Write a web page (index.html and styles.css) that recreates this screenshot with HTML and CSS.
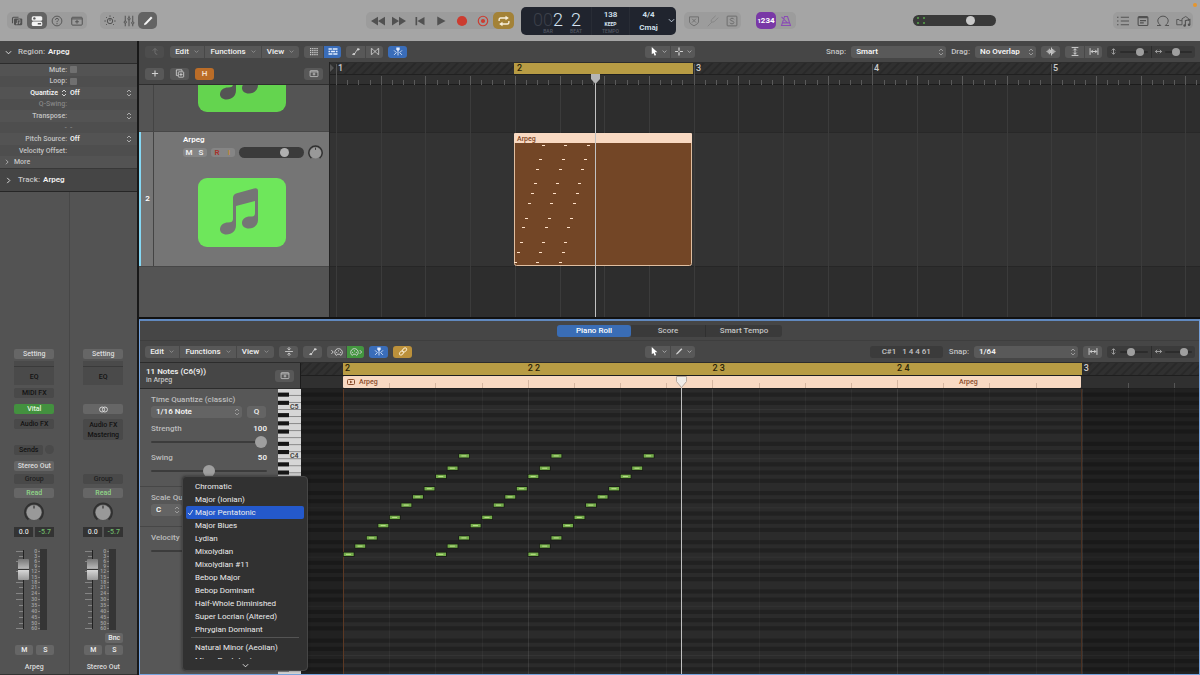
FILE: index.html
```html
<!DOCTYPE html>
<html lang="en">
<head>
<meta charset="utf-8">
<title>Arpeg - Tracks</title>
<link rel="stylesheet" href="styles.css">
</head>
<body>
<svg class="defs" aria-hidden="true">
  <symbol id="i-library" viewBox="0 0 16 16"><path d="M2 11V4.500q0-1.500 1.500-1.500H10" fill="none" stroke="currentColor" stroke-width="1.500"/><rect x="4" y="4.500" width="11" height="9" rx="1.500"/><path d="M8.500 11.500V7l3.500-.8v4.500" fill="none" stroke="#a0a0a0"/><circle cx="7.800" cy="11.500" r="1.100" fill="#a0a0a0"/><circle cx="11.300" cy="10.800" r="1.100" fill="#a0a0a0"/></symbol>
  <symbol id="i-inspector" viewBox="0 0 16 16"><rect x="1" y="1.500" width="14" height="6" rx="2"/><rect x="1" y="8.700" width="14" height="6" rx="2"/><circle cx="4.500" cy="4.500" r="1.600" fill="#5a5a5a"/><path d="M9 11.700h4.500" stroke="#5a5a5a" stroke-width="2"/></symbol>
  <symbol id="i-help" viewBox="0 0 16 16"><g fill="none" stroke="currentColor" stroke-width="1.200"><circle cx="8" cy="8" r="6.500"/><path d="M6 6.500q0-2 2-2t2 1.800q0 1-1.200 1.700-.8.500-.8 1.500"/></g><circle cx="8" cy="11.500" r=".8"/></symbol>
  <symbol id="i-tray" viewBox="0 0 16 16"><g fill="none" stroke="currentColor" stroke-width="1.300"><rect x="1" y="3" width="14" height="10.500" rx="1.200"/><path d="M1 5.200h14M8 6.500v5M5.500 9h5"/></g></symbol>
  <symbol id="i-smart" viewBox="0 0 16 16"><g fill="none" stroke="currentColor" stroke-width="1.300"><circle cx="8" cy="8" r="3.600"/><path d="M8 4.500V8M8 .5v2M2.700 2.700l1.200 1.200M13.300 2.700l-1.200 1.200M.5 8h2M13.500 8h2M2.700 13.300l1.200-1.200M13.300 13.300l-1.200-1.200"/></g></symbol>
  <symbol id="i-mixer" viewBox="0 0 16 16"><g fill="none" stroke="currentColor" stroke-width="1.300"><path d="M3 1v7M3 11v4M8 1v2.500M8 6.500V15M13 1v8M13 12v3"/><circle cx="3" cy="9.500" r="1.500"/><circle cx="8" cy="5" r="1.500"/><circle cx="13" cy="10.500" r="1.500"/></g></symbol>
  <symbol id="i-pencil" viewBox="0 0 16 16"><path d="M2.500 13.500l1-2.500L12 2l2 2-8.500 8.500z"/></symbol>
  <symbol id="i-rew" viewBox="0 0 16 16"><path d="M8 3v10L0 8zM16 3v10L8 8z"/></symbol>
  <symbol id="i-ff" viewBox="0 0 16 16"><path d="M0 3v10l8-5zM8 3v10l8-5z"/></symbol>
  <symbol id="i-start" viewBox="0 0 16 16"><path d="M2 2.500h2.200v11H2zM14 2.500v11L4.500 8z"/></symbol>
  <symbol id="i-play" viewBox="0 0 16 16"><path d="M3 2v12l11-6z"/></symbol>
  <symbol id="i-rec" viewBox="0 0 16 16"><circle cx="8" cy="8" r="6.800" fill="#cc3c30"/></symbol>
  <symbol id="i-cap" viewBox="0 0 16 16"><circle cx="8" cy="8" r="6.300" fill="none" stroke="#cc3c30" stroke-width="1.500"/><circle cx="8" cy="8" r="2.800" fill="#cc3c30"/></symbol>
  <symbol id="i-cycle" viewBox="0 0 16 16"><g fill="none" stroke="currentColor" stroke-width="1.800"><path d="M1.500 8V6q0-2 2-2H12M14.500 8v2q0 2-2 2H4"/></g><path d="M10 1l4.500 3L10 7zM6 9l-4.500 3L6 15z"/></symbol>
  <symbol id="i-replace" viewBox="0 0 16 16"><g fill="none" stroke="currentColor" stroke-width="1.200"><path d="M2 2.500h12v7q0 2-6 5-6-3-6-5zM5.500 5l5 5M10.500 5l-5 5"/></g></symbol>
  <symbol id="i-tuner" viewBox="0 0 16 16"><g fill="none" stroke="currentColor" stroke-width="1.300"><path d="M1 15l5.500-5.500M5.800 6.500q-1 3 .7 3t3-.5L15 3.500M5.800 6.500L11.500 1"/></g></symbol>
  <symbol id="i-solo" viewBox="0 0 16 16"><g fill="none" stroke="currentColor" stroke-width="1.300"><rect x="1.500" y="1.500" width="13" height="13" rx="1"/><path d="M10.500 5.800Q10 4.300 8 4.300T5.600 6q0 1.400 2.400 1.900T10.500 10q0 1.800-2.500 1.800T5.300 10.200"/></g></symbol>
  <symbol id="i-metro" viewBox="0 0 16 16"><g fill="none" stroke="currentColor" stroke-width="1.400"><path d="M6 2h4l4 12H2zM3.500 10.500h9M9.500 10L2 2.500"/></g></symbol>
  <symbol id="i-list" viewBox="0 0 16 16"><path d="M5 3h11M5 8h11M5 13h11M0 3h2M0 8h2M0 13h2" stroke="currentColor" stroke-width="1.300"/></symbol>
  <symbol id="i-note" viewBox="0 0 16 16"><rect x="1.500" y="2" width="13" height="12" rx="1.500" fill="none" stroke="currentColor" stroke-width="1.500"/><path d="M1.500 3.500h13M4 7.500h8M4 10.500h5" stroke="currentColor" stroke-width="1.500"/></symbol>
  <symbol id="i-loop" viewBox="0 0 16 16"><path d="M0 14h5q-4-3-4-6a7 6.500 0 0 1 14 0q0 3-4 6h5" fill="none" stroke="currentColor" stroke-width="1.300"/></symbol>
  <symbol id="i-media" viewBox="0 0 20 16"><path d="M1 13V6h3l1 1.500h3M1 13h7V5l5-3 4 3v3" fill="none" stroke="currentColor" stroke-width="1.200"/><path d="M12.500 14V7.500l6-1.500v7" fill="none" stroke="currentColor" stroke-width="1.500"/><circle cx="11.500" cy="14" r="1.700"/><circle cx="17.400" cy="13" r="1.700"/></symbol>
  <symbol id="i-up" viewBox="0 0 16 16"><path d="M4 6.500L8 2.500l4 4M8 3v7q0 3 4 3" fill="none" stroke="currentColor" stroke-width="1.500"/></symbol>
  <symbol id="i-down" viewBox="0 0 16 16"><path d="M2 5l6 6 6-6" fill="none" stroke="currentColor" stroke-width="2"/></symbol>
  <symbol id="i-right" viewBox="0 0 16 16"><path d="M5 2l6 6-6 6" fill="none" stroke="currentColor" stroke-width="2"/></symbol>
  <symbol id="i-updown" viewBox="0 0 8 12"><path d="M1 4.500L4 1.500l3 3M1 7.500l3 3 3-3" fill="none" stroke="currentColor" stroke-width="1.200"/></symbol>
  <symbol id="i-grid" viewBox="0 0 16 16"><path d="M1 3h14M1 6.500h14M1 10h14M1 13.500h14" stroke="currentColor" stroke-width="2.200" stroke-dasharray="2.200 1.600"/></symbol>
  <symbol id="i-regions" viewBox="0 0 16 16"><path d="M0 3.500h6M7.500 3.500H16M0 8h3M4.500 8h7M13 8h3M0 12.500h7M8.500 12.500H16" stroke="currentColor" stroke-width="2.800"/></symbol>
  <symbol id="i-auto" viewBox="0 0 16 16"><path d="M1 13h2.500Q6 13 7.500 9T12 4h3" fill="none" stroke="currentColor" stroke-width="1.500"/><circle cx="4.500" cy="12.500" r="2"/><circle cx="11.500" cy="4.300" r="2"/></symbol>
  <symbol id="i-flex" viewBox="0 0 16 16"><path d="M1.500 2.500v11l3-2 7-7 3-2v11l-3-2-7-7z" fill="none" stroke="currentColor" stroke-width="1.500"/></symbol>
  <symbol id="i-catch" viewBox="0 0 16 16"><path d="M5 1h6v3.500L8 7.500l-3-3z"/><path d="M8 6v9M1 6l4 4-4 4M15 6l-4 4 4 4" fill="none" stroke="currentColor" stroke-width="1.500"/></symbol>
  <symbol id="i-arrow" viewBox="0 0 16 16"><path d="M4 0v13l3-2.500 2.200 5 2.500-1.200L9.500 9.500H14z"/></symbol>
  <symbol id="i-cross" viewBox="0 0 16 16"><path d="M8 1v5.500M8 9.500V15M1 8h5.500M9.500 8H15" stroke="currentColor" stroke-width="2.200"/></symbol>
  <symbol id="i-wave" viewBox="0 0 16 16"><path d="M1 7v2M3 5v6M5 3v10M7 5v6M9 1v14M11 3.500v9M13 5v6M15 7v2" stroke="currentColor" stroke-width="1.700"/></symbol>
  <symbol id="i-vfit" viewBox="0 0 16 16"><path d="M2 1h12M2 15h12M8 3v10M5 6l3-3 3 3M5 10l3 3 3-3" fill="none" stroke="currentColor" stroke-width="1.700"/></symbol>
  <symbol id="i-hfit" viewBox="0 0 16 16"><path d="M1 2v12M15 2v12M3 8h10M6 5L3 8l3 3M10 5l3 3-3 3" fill="none" stroke="currentColor" stroke-width="1.700"/></symbol>
  <symbol id="i-v" viewBox="0 0 16 16"><path d="M8 2v12M4 5.500L8 1.500l4 4M4 10.500l4 4 4-4" fill="none" stroke="currentColor" stroke-width="2"/></symbol>
  <symbol id="i-h" viewBox="0 0 16 16"><path d="M1 8h14M5 4L1 8l4 4M11 4l4 4-4 4" fill="none" stroke="currentColor" stroke-width="2"/></symbol>
  <symbol id="i-plus" viewBox="0 0 16 16"><path d="M8 2.500v11M2.500 8h11" stroke="currentColor" stroke-width="2"/></symbol>
  <symbol id="i-dup" viewBox="0 0 16 16"><g fill="none" stroke="currentColor" stroke-width="1.500"><path d="M4 11.500H1.500v-10h10V4"/><rect x="5" y="5" width="9.500" height="9.500" rx="1"/><path d="M9.700 7v5.500M7 9.700h5.500"/></g></symbol>
  <symbol id="i-collapse" viewBox="0 0 16 16"><path d="M1 8h14M8 0v5M8 16v-5M5 2.500l3 3 3-3M5 13.500l3-3 3 3" fill="none" stroke="currentColor" stroke-width="1.500"/></symbol>
  <symbol id="i-midiin" viewBox="0 0 20 16"><g fill="none" stroke="currentColor" stroke-width="1.500"><path d="M1 5l3 3-3 3M9 13.500a6 6 0 1 1 7 0l-1.500-2h-4z"/></g><circle cx="9.500" cy="8.500" r="1"/><circle cx="15.500" cy="8.500" r="1"/><circle cx="12.500" cy="6" r="1"/></symbol>
  <symbol id="i-midiout" viewBox="0 0 20 16"><g fill="none" stroke="currentColor" stroke-width="1.500"><path d="M16 5l3 3-3 3M4 13.500a6 6 0 1 1 7 0l-1.500-2h-4z"/></g><circle cx="4.500" cy="8.500" r="1"/><circle cx="10.500" cy="8.500" r="1"/><circle cx="7.500" cy="6" r="1"/></symbol>
  <symbol id="i-link" viewBox="0 0 16 16"><g fill="none" stroke="currentColor" stroke-width="1.700" transform="rotate(-45 8 8)"><rect x="0" y="5.300" width="8.500" height="5.400" rx="2.700"/><rect x="7.500" y="5.300" width="8.500" height="5.400" rx="2.700"/></g></symbol>
  <symbol id="i-stereo" viewBox="0 0 16 16"><g fill="none" stroke="currentColor" stroke-width="1.600"><circle cx="5.500" cy="8" r="4.500"/><circle cx="10.500" cy="8" r="4.500"/></g></symbol>
  <symbol id="i-knob" viewBox="0 0 20 20"><path d="M4.500 17.500A9 9 0 1 1 15.500 17.500" fill="none" stroke="#303030" stroke-width="1.800"/><circle cx="10" cy="10.500" r="7.500" fill="#999"/><path d="M10 3.500v3" stroke="#333" stroke-width="1.200"/></symbol>
  <symbol id="i-music" viewBox="0 0 88 69"><path d="M35 20Q35 16.500 38 15.500L56 10.500Q60 9.500 60 13V42C60 47 56 50.500 51 50.500 46.500 50.500 44 48 44 45 44 41 47.500 38.500 52 38.500 55.500 38.500 57 38 57 35V23L38 28V47C38 53 34 56.500 28.500 56.500 24.500 56.500 22 54 22 51.500 22 47 26 44.500 30 44.500 33.500 44.500 35 43.500 35 41Z"/></symbol>
  <symbol id="i-check" viewBox="0 0 16 16"><path d="M2.500 9l4 4.500L13 2.500" fill="none" stroke="currentColor" stroke-width="2"/></symbol>
</svg>

<header class="topbar">
  <div class="cluster panels">
    <button aria-label="Library"><svg><use href="#i-library"/></svg></button>
    <button class="dark" aria-label="Inspector"><svg><use href="#i-inspector"/></svg></button>
    <button aria-label="Quick Help"><svg><use href="#i-help"/></svg></button>
    <button aria-label="Toolbar"><svg><use href="#i-tray"/></svg></button>
  </div>
  <div class="cluster">
    <button aria-label="Smart Controls"><svg><use href="#i-smart"/></svg></button>
    <button aria-label="Mixer"><svg><use href="#i-mixer"/></svg></button>
    <button class="dark" aria-label="Editors"><svg><use href="#i-pencil"/></svg></button>
  </div>
  <div class="cluster transport">
    <button aria-label="Rewind"><svg><use href="#i-rew"/></svg></button>
    <button aria-label="Forward"><svg><use href="#i-ff"/></svg></button>
    <button aria-label="Go to Beginning"><svg><use href="#i-start"/></svg></button>
    <button aria-label="Play"><svg><use href="#i-play"/></svg></button>
    <button aria-label="Record"><svg><use href="#i-rec"/></svg></button>
    <button aria-label="Capture Recording"><svg><use href="#i-cap"/></svg></button>
    <button class="gold" aria-label="Cycle"><svg><use href="#i-cycle"/></svg></button>
  </div>
  <div class="lcd">
    <div class="lcd-pos"><div class="digits"><span><i>00</i>2</span><b>BAR</b></div><div class="digits"><span>2</span><b>BEAT</b></div></div>
    <div class="lcd-cell"><strong>138</strong><em>KEEP</em><b>TEMPO</b></div>
    <div class="lcd-cell sig"><strong>4/4</strong><strong>Cmaj</strong></div>
    <button aria-label="Display Mode"><svg><use href="#i-down"/></svg></button>
  </div>
  <div class="cluster modes">
    <button aria-label="Replace"><svg><use href="#i-replace"/></svg></button>
    <button class="faint" aria-label="Tuner"><svg><use href="#i-tuner"/></svg></button>
    <button aria-label="Solo"><svg><use href="#i-solo"/></svg></button>
  </div>
  <div class="cluster count">
    <button class="purple"><small>1</small>234</button>
    <button class="violet" aria-label="Metronome"><svg><use href="#i-metro"/></svg></button>
  </div>
  <div class="master"><i></i><i></i><input type="range" value="64" aria-label="Master Volume"></div>
  <div class="cluster views">
    <button aria-label="List Editors"><svg><use href="#i-list"/></svg></button>
    <button aria-label="Note Pads"><svg><use href="#i-note"/></svg></button>
    <button aria-label="Loop Browser"><svg><use href="#i-loop"/></svg></button>
    <button aria-label="Browsers"><svg class="wide"><use href="#i-media"/></svg></button>
  </div>
  <span class="recdot"></span>
</header>

<main class="workspace">
  <aside class="inspector">
    <h2 class="fold"><svg><use href="#i-down"/></svg>Region: <b>Arpeg</b></h2>
    <div class="params">
      <div><label for="mute">Mute:</label><input type="checkbox" id="mute"></div>
      <div><label for="loop">Loop:</label><input type="checkbox" id="loop"></div>
      <div><span class="name strong">Quantize <svg><use href="#i-updown"/></svg></span><b>Off</b><svg><use href="#i-updown"/></svg></div>
      <div class="off"><span class="name">Q-Swing:</span></div>
      <div><span class="name">Transpose:</span><b></b><svg><use href="#i-updown"/></svg></div>
      <div class="off"><span class="name">-</span><span>-</span></div>
      <div><span class="name">Pitch Source:</span><b>Off</b><svg><use href="#i-updown"/></svg></div>
      <div><span class="name">Velocity Offset:</span></div>
      <div class="more"><svg><use href="#i-right"/></svg>More</div>
    </div>
    <h2 class="fold track-fold"><svg><use href="#i-right"/></svg>Track: <b>Arpeg</b></h2>
    <div class="strips">
      <section class="strip">
        <button>Setting</button>
        <div class="eq"><i></i><span>EQ</span></div>
        <button class="slot">MIDI FX</button>
        <button class="green">Vital</button>
        <div><button class="slot">Audio FX</button></div>
        <div class="sends"><button class="slot">Sends</button><i></i></div>
        <button>Stereo Out</button>
        <button class="slot faded">Group</button>
        <button class="read">Read</button>
        <svg class="pan"><use href="#i-knob"/></svg>
        <div class="values"><output>0.0</output><output class="peak">-5.7</output></div>
        <div class="fader"><svg class="scale"></svg><input type="range" value="83" aria-label="Arpeg Volume"></div>
        <div class="pair"></div>
        <div class="pair"><button>M</button><button>S</button></div>
        <div class="strip-name">Arpeg</div>
      </section>
      <section class="strip">
        <button>Setting</button>
        <div class="eq"><i></i><span>EQ</span></div>
        <div></div>
        <button aria-label="Stereo"><svg><use href="#i-stereo"/></svg></button>
        <div><button class="slot double">Audio FX<br>Mastering</button></div>
        <div></div>
        <div></div>
        <button class="slot faded">Group</button>
        <button class="read">Read</button>
        <svg class="pan"><use href="#i-knob"/></svg>
        <div class="values"><output>0.0</output><output class="peak">-5.7</output></div>
        <div class="fader"><svg class="scale"></svg><input type="range" value="83" aria-label="Stereo Out Volume"></div>
        <div class="pair"><button>Bnc</button></div>
        <div class="pair"><button>M</button><button>S</button></div>
        <div class="strip-name">Stereo Out</div>
      </section>
    </div>
  </aside>

  <div class="panes">
    <section class="tracks">
      <div class="toolbar">
        <div class="side">
          <div class="seg one dim"><button aria-label="Up"><svg><use href="#i-up"/></svg></button></div>
          <div class="seg menus"><button>Edit <svg><use href="#i-down"/></svg></button><button>Functions <svg><use href="#i-down"/></svg></button><button>View <svg><use href="#i-down"/></svg></button></div>
          <div class="seg"><button aria-label="Live Loops"><svg><use href="#i-grid"/></svg></button><button class="blue" aria-label="Tracks View"><svg><use href="#i-regions"/></svg></button></div>
          <div class="seg"><button aria-label="Automation"><svg><use href="#i-auto"/></svg></button><button aria-label="Flex"><svg><use href="#i-flex"/></svg></button></div>
          <div class="seg"><button class="blue" aria-label="Catch Playhead"><svg><use href="#i-catch"/></svg></button></div>
        </div>
        <div class="seg tools"><button aria-label="Pointer Tool"><svg class="white"><use href="#i-arrow"/></svg><svg class="chev"><use href="#i-down"/></svg></button><button aria-label="Marquee Tool"><svg><use href="#i-cross"/></svg><svg class="chev"><use href="#i-down"/></svg></button></div>
        <div class="side end">
          <label for="snap">Snap:</label>
          <span class="pick snap"><select id="snap"><option>Smart</option></select><svg><use href="#i-updown"/></svg></span>
          <label for="drag">Drag:</label>
          <span class="pick drag"><select id="drag"><option>No Overlap</option></select><svg><use href="#i-updown"/></svg></span>
          <div class="seg"><button aria-label="Waveform Zoom"><svg><use href="#i-wave"/></svg></button></div>
          <div class="seg"><button aria-label="Fit Vertically"><svg><use href="#i-vfit"/></svg></button><button aria-label="Fit Horizontally"><svg><use href="#i-hfit"/></svg></button></div>
          <div class="zoomer"><svg><use href="#i-v"/></svg><input type="range" value="80" aria-label="Vertical Zoom"><i></i><svg><use href="#i-h"/></svg><input type="range" value="38" aria-label="Horizontal Zoom"></div>
        </div>
      </div>
      <div class="arrange">
        <div class="headers">
          <div class="headbar">
            <div class="seg"><button aria-label="Add Track"><svg><use href="#i-plus"/></svg></button></div>
            <div class="seg"><button aria-label="Duplicate Track"><svg><use href="#i-dup"/></svg></button></div>
            <div class="seg"><button class="orange">H</button></div>
            <div class="seg last"><button aria-label="Track Header Options"><svg><use href="#i-tray"/></svg></button></div>
          </div>
          <div class="track first"><span class="num"></span><div class="body"><div class="art"><svg><use href="#i-music"/></svg></div></div></div>
          <div class="track selected"><span class="num">2</span>
            <div class="body">
              <h3>Arpeg</h3>
              <div class="trackctl">
                <div class="ms"><button>M</button><button>S</button></div>
                <div class="ms"><button class="r">R</button><button class="i">I</button></div>
                <input type="range" value="74" aria-label="Track Volume">
                <svg><use href="#i-knob"/></svg>
              </div>
              <div class="art"><svg><use href="#i-music"/></svg></div>
            </div>
          </div>
        </div>
        <svg class="timeline" id="timeline"></svg>
      </div>
    </section>

    <section class="editor">
      <nav class="tabs"><button class="on">Piano Roll</button><button>Score</button><button>Smart Tempo</button></nav>
      <div class="toolbar">
        <div class="side">
          <div class="seg menus"><button>Edit <svg><use href="#i-down"/></svg></button><button>Functions <svg><use href="#i-down"/></svg></button><button>View <svg><use href="#i-down"/></svg></button></div>
          <div class="seg"><button aria-label="Collapse"><svg><use href="#i-collapse"/></svg></button></div>
          <div class="seg"><button aria-label="Automation"><svg><use href="#i-auto"/></svg></button></div>
          <div class="seg"><button aria-label="MIDI In"><svg class="wide"><use href="#i-midiin"/></svg></button><button class="leaf" aria-label="MIDI Out"><svg class="wide"><use href="#i-midiout"/></svg></button></div>
          <div class="seg"><button class="blue" aria-label="Catch Playhead"><svg><use href="#i-catch"/></svg></button></div>
          <div class="seg"><button class="amber" aria-label="Link"><svg><use href="#i-link"/></svg></button></div>
        </div>
        <div class="seg tools"><button aria-label="Pointer Tool"><svg class="white"><use href="#i-arrow"/></svg><svg class="chev"><use href="#i-down"/></svg></button><button aria-label="Pencil Tool"><svg><use href="#i-pencil"/></svg><svg class="chev"><use href="#i-down"/></svg></button></div>
        <div class="side end">
          <output class="info"><span>C#1</span><span>1 4 4 61</span></output>
          <label for="esnap">Snap:</label>
          <span class="pick esnap"><select id="esnap"><option>1/64</option></select><svg><use href="#i-updown"/></svg></span>
          <div class="seg"><button aria-label="Fit Horizontally"><svg><use href="#i-hfit"/></svg></button></div>
          <div class="zoomer"><svg><use href="#i-v"/></svg><input type="range" value="38" aria-label="Editor Vertical Zoom"><i></i><svg><use href="#i-h"/></svg><input type="range" value="82" aria-label="Editor Horizontal Zoom"></div>
        </div>
      </div>
      <div class="roll">
        <div class="local">
          <div class="localhead"><div><h3>11 Notes (C6(9))</h3><p>in Arpeg</p></div><div class="seg"><button aria-label="Region Options"><svg><use href="#i-tray"/></svg></button></div></div>
          <div class="localbody">
            <div class="settings">
              <div class="group">
                <label for="tq">Time Quantize (classic)</label>
                <div class="row"><span class="pick tq"><select id="tq"><option>1/16 Note</option></select><svg><use href="#i-updown"/></svg></span><div class="seg"><button>Q</button></div></div>
                <div class="row ends"><label for="strength">Strength</label><b>100</b></div>
                <input type="range" id="strength" value="100">
                <div class="row ends"><label for="swing">Swing</label><b>50</b></div>
                <input type="range" id="swing" value="50">
              </div>
              <div class="group scale-q">
                <label for="key">Scale Quantize</label>
                <div class="row"><span class="pick key"><select id="key"><option>C</option></select><svg><use href="#i-updown"/></svg></span></div>
              </div>
              <div class="group vel">
                <div class="row ends"><label for="velocity">Velocity</label></div>
                <input type="range" id="velocity" value="50">
              </div>
            </div>
            <svg class="keys" id="keys"></svg>
          </div>
        </div>
        <svg class="notes" id="notes"></svg>
      </div>
      <div class="popup" role="listbox" aria-label="Scale">
        <div class="opts">
          <button>Chromatic</button><button>Major (Ionian)</button><button class="sel"><svg><use href="#i-check"/></svg>Major Pentatonic</button><button>Major Blues</button><button>Lydian</button><button>Mixolydian</button><button>Mixolydian #11</button><button>Bebop Major</button><button>Bebop Dominant</button><button>Half-Whole Diminished</button><button>Super Locrian (Altered)</button><button>Phrygian Dominant</button>
        </div>
        <hr>
        <button>Natural Minor (Aeolian)</button>
        <button class="cut">Minor Pentatonic</button>
        <svg class="moredown"><use href="#i-down"/></svg>
      </div>
    </section>
  </div>
</main>
<script src="script.js"></script>
</body>
</html>
```
FILE: styles.css
```css
* { box-sizing: border-box; }
body { margin: 0; height: 100vh; display: flex; flex-direction: column; overflow: hidden; background: #111; color: #dcdcdc; font: 500 8px/10px Roboto, "Liberation Sans", sans-serif; }
button, select, input { font: inherit; color: inherit; margin: 0; }
button { border: 0; padding: 0; background: none; }
h2, h3, p { margin: 0; font-size: inherit; font-weight: inherit; }
svg { fill: currentColor; flex: none; display: block; }
.defs { position: absolute; width: 0; height: 0; }
b { font-weight: 600; color: #f2f2f2; }

input[type=range] { appearance: none; background: none; height: 12px; min-width: 0; }
input[type=range]::-webkit-slider-runnable-track { height: 2px; background: #3c3c3c; border-radius: 1px; }
input[type=range]::-webkit-slider-thumb { appearance: none; width: 8px; height: 8px; margin-top: -3px; border-radius: 50%; background: #9f9f9f; }

.topbar { position: relative; height: 41px; flex: none; display: flex; align-items: center; padding: 0 7px; background: #a5a5a5; color: #515151; }
.cluster { display: flex; height: 17px; border-radius: 5px; background: #9c9c9c; margin-right: 13px; }
.cluster button { width: 19px; display: grid; place-items: center; border-radius: 5px; }
.cluster.panels button { width: 20px; }
.cluster svg { width: 12px; height: 12px; }
.cluster svg.wide { width: 15px; height: 12px; }
.cluster .dark { background: #636363; color: #f4f4f4; }
.cluster .gold { background: #a38237; color: #f8f0dc; }
.cluster .purple { background: #7938a6; color: #fff; display: block; font-weight: 700; }
.purple small { font-size: 6px; }
.cluster .violet { color: #8a4cb5; }
.cluster .faint { color: #868686; }
.cluster.transport { margin: 0 7px 0 196px; padding-left: 1px; }
.cluster.transport button { width: 21px; }
.cluster.transport button:nth-child(-n+2) svg { width: 14px; height: 14px; }
.lcd { width: 155px; height: 28px; flex: none; display: flex; border-radius: 5px; background: #20242e; color: #d6e4f2; margin-right: 8px; }
.lcd-pos { width: 70px; display: flex; gap: 8px; padding-left: 12px; }
.digits { display: flex; flex-direction: column; align-items: center; font-weight: 300; width: 30px; }
.digits + .digits { width: 10px; }
.digits span { font-size: 18px; line-height: 21px; height: 21px; padding-top: 2px; }
.digits i { font-style: normal; color: #3b3f49; }
.lcd b { font-size: 5px; line-height: 7px; color: #535863; font-weight: 500; }
.lcd-cell { width: 38px; border-left: 1px solid #282c35; display: flex; flex-direction: column; align-items: center; }
.lcd-cell strong { font-size: 8px; line-height: 10px; padding-top: 3px; font-weight: 600; }
.lcd-cell em { font-style: normal; font-weight: 700; font-size: 5px; line-height: 8px; }
.lcd button { flex: 1; display: grid; place-items: center; }
.lcd button svg { width: 7px; height: 7px; }
.modes, .count { color: #6c6c6c; }
.cluster.modes { margin-right: 15px; }
.cluster.count button { width: 20px; }
.cluster.count { margin-right: 117px; }
.master { display: flex; align-items: center; gap: 4px; width: 83px; height: 11px; border-radius: 6px; background: #393939; padding-left: 4px; }
.master i { width: 2px; height: 7px; border-top: 2px dotted #4f8b46; border-bottom: 2px dotted #4f8b46; }
.master input { flex: 1; }
.master input::-webkit-slider-runnable-track, .trackctl input::-webkit-slider-runnable-track { background: none; height: 9px; }
.master input::-webkit-slider-thumb { width: 9px; height: 9px; margin: 0; background: #c9c9c9; }
.cluster.views { margin: 0 0 0 auto; }
.cluster.views button { width: 20px; }
.recdot { position: absolute; right: 3px; top: 3px; width: 4px; height: 4px; border-radius: 50%; background: #e5962e; }

.workspace { flex: 1; min-height: 0; display: flex; }
.inspector { width: 139px; flex: none; display: flex; flex-direction: column; background: #535353; border-right: 2px solid #181818; }
.fold { height: 22px; flex: none; display: flex; align-items: center; gap: 3px; background: #454545; color: #c4c4c4; }
.fold svg { width: 7px; height: 7px; margin: 0 3px 0 5px; color: #eee; }
.params { border-top: 1px solid #2c2c2c; height: 105px; display: grid; grid-template-rows: repeat(9, 1fr); color: #c4c4c4; font-size: 7px; }
.params > div { display: flex; align-items: center; gap: 3px; }
.params > div:nth-child(even) { background: #4e4e4e; }
.params label, .params .name { width: 67px; text-align: right; display: flex; justify-content: flex-end; align-items: center; gap: 3px; }
.params b { width: 53px; }
.params svg { width: 6px; height: 8px; }
.params .strong { color: #f2f2f2; font-weight: 600; }
.params .off { color: #858585; }
.params input { appearance: none; width: 7px; height: 7px; border-radius: 1px; background: #707070; }
.params .more svg { width: 6px; height: 6px; margin: 0 1px 0 4px; }
.track-fold { height: 24px; border-top: 1px solid #383838; border-bottom: 1px solid #262626; }
.strips { flex: 1; display: grid; grid-template-columns: 1fr 1fr; border-bottom: 1px solid #333; font-size: 7px; }
.strip { display: grid; align-content: end; justify-content: center; grid-template-columns: 40px; grid-template-rows: 12px 27px 16px 15px 26px 16px 13px 14px 14px 25px 22px 84px 12px 17px 12px; align-items: start; }
.strip + .strip { border-left: 1px solid #474747; }
.strip button { width: 100%; height: 10px; border-radius: 2px; background: #666; color: #dcdcdc; line-height: 10px; display: block; }
.strip button svg { width: 9px; height: 9px; margin: 0 auto; }
.strip .slot { background: #494949; color: #131313; }
.strip .double { height: 21px; }
.strip .faded { color: #202020; }
.strip .green { background: #43913f; color: #e0f5dc; }
.strip .read { color: #8fd487; }
.eq { height: 24px; background: #4a4a4a; color: #131313; text-align: center; }
.eq i { display: block; height: 6px; border-bottom: 1px solid #3a3a3a; }
.eq span { line-height: 20px; }
.sends { display: flex; gap: 2px; }
.sends .slot { width: 29px; }
.sends i { width: 9px; height: 9px; border-radius: 50%; background: #4a4a4a; }
.pan { width: 20px; height: 20px; margin: 0 auto; }
.values { display: grid; grid-template-columns: 1fr 1fr; gap: 2px; text-align: center; color: #ddd; }
.values output { background: #333; height: 10px; }
.values .peak { color: #6fb86a; }
.fader { position: relative; height: 81px; }
.scale { width: 40px; height: 81px; font-size: 5px; fill: #aaa; }
.fader input { position: absolute; left: 3px; top: 0; width: 14px; height: 81px; writing-mode: vertical-lr; direction: rtl; }
.fader input::-webkit-slider-runnable-track { width: 12px; height: 81px; background: none; }
.fader input::-webkit-slider-thumb { width: 11px; height: 21px; margin: 0; border-radius: 1px; background: linear-gradient(#777, #b8b8b8 45%, #333 47%, #333 52%, #d5d5d5 54%, #999); }
.pair { display: flex; justify-content: flex-end; gap: 3px; }
.strip .pair button { width: 18px; color: #eee; }
.strip-name { text-align: center; white-space: nowrap; margin: 0 -8px; }

.panes { flex: 1; min-width: 0; display: flex; flex-direction: column; }
.tracks { height: 277px; flex: none; display: flex; flex-direction: column; }
.toolbar { height: 21px; flex: none; display: grid; grid-template-columns: 1fr auto 1fr; align-items: center; padding: 0 5px 0 6px; background: #464646; }
.side { display: flex; gap: 5px; align-items: center; }
.side.end { justify-content: flex-end; gap: 5px; }
.side label { color: #c4c4c4; }
.seg { display: flex; height: 12px; border-radius: 3px; overflow: hidden; background: #585858; color: #d2d2d2; }
.seg button { width: 19px; height: 12px; display: flex; align-items: center; justify-content: center; gap: 2px; line-height: 12px; }
.seg button + button { border-left: 1px solid #484848; width: 18px; }
.seg svg { width: 10px; height: 9px; }
.seg svg.wide { width: 14px; height: 10px; }
.seg.dim { background: #4d4d4d; color: #777; margin-right: 1px; }
.seg .blue { background: #3a6db9; color: #e4eeff; }
.seg .orange { background: #bb6d28; color: #f4dfc8; font-weight: 600; }
.seg .leaf { background: #43963f; }
.seg .amber { background: #bc913b; color: #f5e6c6; }
.seg.menus { width: 129px; color: #f0f0f0; }
.seg.menus button { width: 34px; }
.seg.menus button + button { width: 57px; }
.seg.menus button:last-child { width: 38px; }
.seg.menus svg { width: 5px; height: 5px; margin-left: 3px; color: #aaa; }
.seg.tools button, .seg.tools button + button { width: 25px; gap: 3px; }
.seg .chev { width: 5px; height: 5px; }
.tools .white { color: #fff; }
.pick { position: relative; display: block; height: 12px; }
.pick select { appearance: none; width: 100%; height: 12px; line-height: 12px; border: 0; border-radius: 3px; padding: 0 5px; background: #595959; color: #f4f4f4; font-weight: 600; }
.pick svg { position: absolute; right: 2px; top: 2px; width: 6px; height: 8px; color: #aaa; pointer-events: none; }
.snap { width: 95px; }
.drag { width: 61px; }
.esnap { width: 104px; }
.zoomer { display: flex; align-items: center; width: 88px; height: 12px; border-radius: 3px; background: #3b3b3b; color: #aaa; padding: 0 3px; gap: 3px; }
.zoomer svg { width: 7px; height: 7px; }
.zoomer i { width: 1px; height: 12px; background: #2d2d2d; }
.zoomer input { flex: 1; width: 0; }
.zoomer input::-webkit-slider-runnable-track { background: #2c2c2c; }
.info { width: 73px; height: 12px; line-height: 12px; border-radius: 3px; background: #3b3b3b; color: #c4c4c4; display: flex; justify-content: center; gap: 6px; margin-right: 1px; }

.arrange { flex: 1; min-height: 0; display: flex; border-bottom: 1px solid #111; }
.headers { width: 191px; flex: none; display: flex; flex-direction: column; background: #545454; border-right: 1px solid #222; }
.headbar { height: 23px; flex: none; display: flex; align-items: center; gap: 6px; padding: 1px 6px 0; background: #464646; border-bottom: 1px solid #2e2e2e; }
.last { margin-left: auto; }
.track { display: flex; border-bottom: 1px solid #474747; }
.num { width: 15px; flex: none; border-right: 1px solid #444; display: grid; place-items: center; font-weight: 600; padding-left: 3px; }
.track .body { flex: 1; padding: 0 6px 0 29px; }
.first { height: 47px; overflow: hidden; align-items: stretch; }
.first .body { display: flex; align-items: flex-end; padding-bottom: 19px; }
.first .art { margin-top: 0; background: #64d44f; color: #545454; }
.selected { height: 135px; background: #757575; box-shadow: inset 2px 0 #86d8f4; color: #fff; }
.track h3 { padding-top: 3px; line-height: 10px; font-weight: 600; }
.trackctl { display: flex; align-items: center; gap: 4px; height: 15px; }
.ms { display: flex; border-radius: 3px; overflow: hidden; background: #858585; color: #eee; font-weight: 600; }
.ms button { width: 12px; height: 9px; line-height: 10px; }
.ms .r { color: #a8322b; }
.ms .i { color: #c78a37; }
.trackctl input { width: 65px; height: 11px; border-radius: 6px; background: #3b3b3b; padding: 0 1px; }
.trackctl input::-webkit-slider-thumb { width: 9px; height: 9px; margin: 0; background: #b0b0b0; }
.trackctl svg { width: 15px; height: 15px; }
.art { width: 88px; height: 69px; flex: none; border-radius: 9px; margin: 18px 0 0 15px; background: #6ee75b; color: #757575; }
.art svg { width: 88px; height: 69px; }
.timeline, .notes { flex: 1; width: 0; height: 100%; overflow: hidden; font-size: 9px; font-weight: 500; }
.small { font-size: 7px; font-weight: 500; }

.editor { position: relative; flex: 1; min-height: 0; display: flex; flex-direction: column; border: 1px solid #76a2dc; border-top: 2px solid #6189bf; background: #464646; margin-top: 1px; }
.tabs { height: 20px; flex: none; display: flex; justify-content: center; align-items: center; border-bottom: 1px solid #3e3e3e; }
.tabs button { height: 12px; width: 74px; background: #3a3a3a; color: #c4c4c4; }
.tabs button:last-child { width: 77px; border-left: 1px solid #303030; border-radius: 0 3px 3px 0; }
.tabs .on { background: #3a6db5; color: #fff; border-radius: 3px; }
.editor .toolbar { padding: 0 4px 0 5px; }
.roll { flex: 1; min-height: 0; display: flex; border-top: 1px solid #2c2c2c; }
.local { width: 161px; flex: none; display: flex; flex-direction: column; border-right: 1px solid #1c1c1c; }
.localhead { height: 26px; flex: none; display: flex; justify-content: space-between; align-items: center; padding: 0 6px; border-bottom: 1px solid #2c2c2c; }
.localhead h3 { font-weight: 600; line-height: 9px; color: #eee; }
.localhead p { line-height: 9px; color: #c4c4c4; font-size: 7px; }
.localbody { flex: 1; min-height: 0; display: flex; }
.settings { flex: 1; background: #575757; color: #bdbdbd; }
.keys { width: 23px; height: 100%; background: #d6d6d6; overflow: hidden; }
.group { padding: 6px 11px 0; border-bottom: 1px solid #474747; }
.group .row { display: flex; gap: 5px; align-items: center; }
.group > label { display: block; }
.group .row + .row { margin-top: 6px; }
.group input + .row { margin-top: 3px; }
.group .ends { justify-content: space-between; height: 10px; }
.group input { display: block; width: 116px; height: 16px; }
.group input::-webkit-slider-thumb { width: 12px; height: 12px; margin-top: -5px; }
.group .pick select { background: #646464; }
.group .seg { background: #646464; color: #eee; }
.tq { width: 91px; margin-top: 1px; }
.tq + .seg { margin-top: 1px; }
.group:first-child { height: 98px; }
.group.scale-q { height: 40px; }
.key { width: 31px; margin-top: 1px; }
.vel { border: 0; }
.popup { position: absolute; left: 42px; top: 155px; width: 126px; height: 195px; padding: 3px; border-radius: 4px; background: #313131; border: 1px solid #464646; box-shadow: 0 0 3px #1118; color: #ececec; font-weight: 400; }
.popup button { display: block; position: relative; width: 100%; height: 13px; line-height: 13px; padding-left: 9px; text-align: left; border-radius: 2px; }
.opts { height: 155px; display: grid; grid-template-rows: repeat(12, 1fr); }
.popup .sel { background: #2459cc; }
.sel svg { position: absolute; left: 1px; top: 3px; width: 7px; height: 7px; }
.popup hr { border: 0; border-top: 1px solid #545454; margin: 2px 5px 3px; }
.popup .cut { height: 5px; overflow: hidden; }
.moredown { width: 7px; height: 7px; margin: 3px auto 0; }
```
FILE: script.js
```js
const shape = (tag, attrs, text = "") =>
  `<${tag} ${Object.entries(attrs).map(([k, v]) => `${k}="${v}"`).join(" ")}>${text}</${tag}>`;
const box = (x, y, width, height, fill, extra = {}) => shape("rect", { x, y, width, height, fill, ...extra });
const text = (x, y, value, fill, extra = {}) => shape("text", { x, y, fill, ...extra }, value);
const hatch = (id) => `<defs><pattern id="${id}" width="6" height="6" patternUnits="userSpaceOnUse" patternTransform="rotate(45)"><rect width="6" height="6" fill="#303030"/><rect width="2" height="6" fill="#292929"/></pattern></defs>`;
const SPAN = 4000;

/* rows below the highest note of the arpeggio, lowest note first */
const rows = [24, 22, 20, 17, 15, 12, 10, 8, 5, 3, 0];

function drawTimeline() {
  const el = document.getElementById("timeline");
  const bar = 178.8, first = 6, wide = el.clientWidth;
  let s = hatch("hatchA");
  s += box(0, 0, SPAN, 400, "#2d2d2d") + box(0, 71, SPAN, 133, "#333");
  s += box(0, 1, SPAN, 11, "url(#hatchA)") + box(0, 12, SPAN, 11, "#303030");
  s += box(0, 12, SPAN, 1, "#202020") + box(0, 22, SPAN, 1, "#1c1c1c") + box(0, 70, SPAN, 1, "#282828") + box(0, 204, SPAN, 1, "#262626");
  for (let i = 0; i * bar / 16 < wide; i++) {
    const x = Math.round(first + i * bar / 16);
    const beat = i % 4 === 0;
    s += box(x, beat ? 14 : 18, 1, beat ? 9 : 5, "#5a5a5a");
    if (beat) s += box(x, 23, 1, 400, "#3b3b3b");
  }
  const at = (n) => Math.round(first + (n - 1) * bar);
  s += box(at(2) - 1, 1, 179, 11, "#b89c44");
  for (let n = 1; at(n) < wide - 10; n++) {
    if (n !== 2) s += box(at(n), 2, 1, 20, "#555");
    s += text(at(n) + 2, 9, n, n === 2 ? "#2b2307" : "#ccc");
  }
  s += '<path d="M0 2l4 4-4 4z" fill="#555"/>';
  const rx = at(2) - 1;
  s += box(rx + .5, 71.5, 177, 132, "#734626", { rx: 2, stroke: "#e0bea0" });
  s += box(rx, 71, 178, 10, "#f8d9c2", { rx: 1 }) + text(rx + 3, 79, "Arpeg", "#7c4423", { class: "small" });
  const ys = [263, 253, 243, 228, 219, 204, 194, 184, 170, 160, 146];
  for (let r = 0; r < 3; r++) ys.forEach((y, i) => {
    s += box(Math.round(rx + (i + r * 8) * 2.8), y - 63, 3, 1, "#ffe2c9") ;
  });
  s += box(265, 18, 1, 300, "#c2c2c2");
  s += '<path d="M261 12h9v5l-4.500 5-4.500-5z" fill="#b5b5b5"/>';
  el.innerHTML = s;
}

const SEMI = 4.1, OCT = SEMI * 12, TOP = 458.2 - 363 - OCT * 3;
const BLACK = [1, 3, 5, 8, 10];

function drawRoll() {
  const start = 42, end = 781, beat = 184.7;
  let s = hatch("hatchB") + box(0, 0, SPAN, 800, "#2b2b2b");
  for (let o = 0; o < 14; o++) {
    const y = TOP + o * OCT;
    BLACK.forEach((b) => { s += box(0, y + b * SEMI, SPAN, SEMI, "#212121"); });
    s += box(0, y, SPAN, 1, "#343434");
  }
  s += box(0, 26, start, 800, "#000", { opacity: .22 }) + box(end, 26, SPAN, 800, "#000", { opacity: .22 });
  for (let i = -1; i < 80; i++) s += box(Math.round(start + i * beat / 4), 26, 1, 800, "#fff", { opacity: i % 4 ? .04 : .09 });
  s += box(start, 26, 1, 800, "#5b3823") + box(end - 1, 26, 1, 800, "#4b3021");
  s += box(0, 0, SPAN, 13, "url(#hatchB)") + box(0, 12, SPAN, 14, "#303030") + box(0, 12, SPAN, 1, "#1e1e1e");
  s += box(start, 0, end - start, 12, "#b89c44") + box(start, 13, end - start - 1, 12, "#f8d9c2", { rx: 1 });
  for (let i = 1; i < 80; i++) {
    const x = Math.round(start + i * beat / 4), main = i % 4 === 0;
    if (i !== 16) s += box(x, main ? 17 : 20, 1, main ? 8 : 5, i < 16 ? "#d5b6a0" : "#555");
  }
  s += box(0, 25, SPAN, 1, "#1b1b1b", { opacity: .8 });
  ["2", "2 2", "2 3", "2 4", "3"].forEach((t, i) => {
    s += text(start + (i ? i * beat : 2) + (i === 4 ? 2 : 0), 8, t, i < 4 ? "#2b2307" : "#ccc");
  });
  s += '<rect x="46.500" y="16.500" width="7" height="5" rx="1" fill="none" stroke="#8a4c2b"/><path d="M49 17.500v3l2.500-1.500z" fill="#8a4c2b"/>';
  s += text(58, 21, "Arpeg", "#8a4c2b", { class: "small" }) + text(658, 21, "Arpeg", "#8a4c2b", { class: "small" });
  for (let r = 0; r < 3; r++) rows.forEach((n, i) => {
    const x = start + (i + r * 8) * 11.54, y = 90.8 + n * SEMI;
    s += box(x, y - .3, 11.5, 4.800, "#161a12") + box(x + .7, y + .4, 10, 3.400, "#74ad4b") + box(x + 3, y + 1.600, 5, 1, "#c0e38e");
  });
  s += box(380, 20, 1, 800, "#c0c0c0");
  s += '<path d="M375.500 13.500h10v5l-5 6-5-6z" fill="#f1ece8" stroke="#b9aaa0"/>';
  document.getElementById("notes").innerHTML = s;
}

function drawKeys() {
  let s = "";
  for (let o = 0; o < 14; o++) {
    const y = TOP - 26 + o * OCT;
    for (let k = 0; k < 7; k++) s += box(0, y + k * OCT / 7, 23, 1, "#8a8a8a");
    BLACK.forEach((b) => { s += box(0, y + b * SEMI, 11, SEMI, "#161616"); });
    if (o > 1 && o < 8) s += text(12, y, `C${7 - o}`, "#333", { class: "small" });
  }
  document.getElementById("keys").innerHTML = s;
}

function drawScales() {
  const marks = [[0, 2], [3, 7], [6, 12], [9, 17], [12, 22], [15, 28], [18, 33], [21, 38], [24, 44], [30, 50], [35, 56], [40, 62], [45, 68], [50, 74], [60, 79]];
  let s = box(9, 1, 1, 79, "#222") + box(26, 0, 7, 81, "#353535");
  marks.forEach(([n, y]) => {
    s += box(n % 6 ? 5 : 2, y, n % 6 ? 4 : 7, 1, "#858585");
    s += text(23, y + 2, n, "#a5a5a5", { "text-anchor": "end" }) + box(24, y, 2, 1, "#858585");
  });
  document.querySelectorAll(".scale").forEach((el) => { el.innerHTML = s; });
}

drawTimeline();
drawRoll();
drawKeys();
drawScales();
window.addEventListener("resize", drawTimeline);
```
